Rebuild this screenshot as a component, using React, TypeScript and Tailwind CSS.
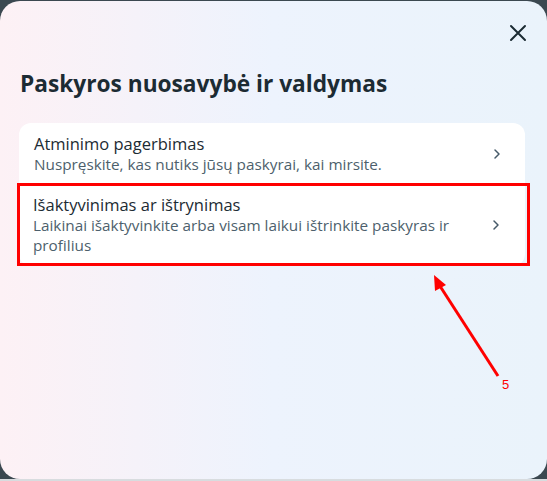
import React from "react";

const items = [
  {
    title: "Atminimo pagerbimas",
    text: "Nuspręskite, kas nutiks jūsų paskyrai, kai mirsite.",
    marked: false,
  },
  {
    title: "Išaktyvinimas ar ištrynimas",
    text: "Laikinai išaktyvinkite arba visam laikui ištrinkite paskyras ir profilius",
    marked: true,
  },
];

function Chevron() {
  return (
    <svg width="16" height="16" viewBox="0 0 16 16" fill="none" className="shrink-0">
      <path d="M6 4l4 4-4 4" stroke="#465a69" strokeWidth="1.5" strokeLinecap="round" strokeLinejoin="round" />
    </svg>
  );
}

export default function App() {
  return (
    <div className="w-[547px] h-[481px] bg-[#3b4850] flex flex-col overflow-hidden" style={{ fontFamily: "'Open Sans', 'Noto Sans', sans-serif" }}>
      <div className="relative mt-px h-[478px] rounded-[20px] bg-gradient-to-r from-[#fdf1f5] via-[#edf3fd] to-[#eaf3fb] px-[19px]">
        {/* close */}
        <div className="flex justify-end pt-[22px] pr-0">
          <svg width="20" height="20" viewBox="0 0 20 20" fill="none">
            <path d="M3 3l14 14M17 3L3 17" stroke="#1c2b33" strokeWidth="2" strokeLinecap="round" />
          </svg>
        </div>
        <h1 className="mt-[26px] pl-px text-[22.7px] leading-[30px] font-bold text-[#1c2b33]">
          Paskyros nuosavybė ir valdymas
        </h1>
        <div className="mt-[24px] w-[506px] rounded-[12px] bg-white">
          {items.map((it) => (
            <div
              key={it.title}
              className={
                it.marked
                  ? "-ml-[2px] -mb-[3px] w-[513px] flex items-center border-[3px] border-[#ff0000] pl-[13px] pr-[23px] pt-[8px] pb-[8px]"
                  : "flex items-center pl-[15px] pr-[20px] pt-[10px] pb-[9px]"
              }
            >
              <div className="flex-1 pr-[30px]">
                <div className="text-[16.5px] leading-[21px] text-[#1c2b33]">{it.title}</div>
                <div className="text-[15.3px] leading-[20px] text-[#4d5f6c]">{it.text}</div>
              </div>
              <Chevron />
            </div>
          ))}
        </div>
        {/* annotation arrow */}
        <svg className="absolute left-[425px] top-[266px]" width="100" height="130" viewBox="0 0 100 130">
          <line x1="73" y1="109" x2="13" y2="16" stroke="#ff0000" strokeWidth="3" />
          <polygon points="9,8 21,18 10,24" fill="#ff0000" />
          <text x="77" y="122" fill="#ff0000" fontSize="13" fontFamily="Liberation Sans, sans-serif">5</text>
        </svg>
      </div>
      <div className="h-[2px] bg-[#d8dcdf]" />
    </div>
  );
}
